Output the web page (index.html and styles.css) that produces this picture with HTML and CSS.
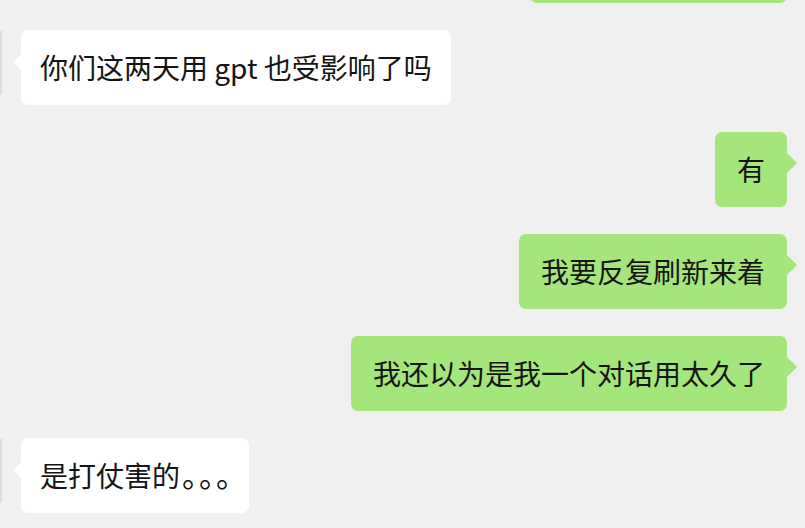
FILE: index.html
```html
<!DOCTYPE html>
<html lang="zh-CN">
<head>
	<meta charset="UTF-8">
	<title>聊天记录</title>
	<link rel="stylesheet" href="styles.css">
</head>
<body>
	<div class="chat">
		<div class="row mine">
			<div class="bubble cut"></div>
		</div>
		<div class="row other">
			<div class="avatar"></div>
			<div class="bubble">你们这两天用 gpt 也受影响了吗</div>
		</div>
		<div class="row mine">
			<div class="bubble">有</div>
		</div>
		<div class="row mine">
			<div class="bubble">我要反复刷新来着</div>
		</div>
		<div class="row mine">
			<div class="bubble">我还以为是我一个对话用太久了</div>
		</div>
		<div class="row other">
			<div class="avatar"></div>
			<div class="bubble">是打仗害的<span class="dots">。。。</span></div>
		</div>
	</div>
</body>
</html>
```

FILE: styles.css
```css
html, body {
	margin: 0;
	padding: 0;
	background: #f0f0f0;
	overflow: hidden;
}
body {
	width: 805px;
	height: 528px;
	font-family: "Noto Sans CJK SC", "Noto Sans", sans-serif;
}
.chat {
	display: flex;
	flex-direction: column;
	gap: 27px;
	margin-top: -72px;
}
.row {
	display: flex;
	align-items: flex-start;
}
.row.mine {
	justify-content: flex-end;
	padding-right: 18px;
}
.avatar {
	width: 3px;
	height: 64px;
	margin-top: 1px;
	margin-right: 18px;
	background: linear-gradient(to right, #d2d4d8, #e6e7e9 70%, #eeeeee);
}
.bubble {
	position: relative;
	font-size: 28px;
	line-height: 37px;
	padding: 19px;
	border-radius: 7px;
	color: #151515;
	white-space: nowrap;
}
.mine .bubble {
	background: #a4e57c;
	padding-left: 22px;
	padding-right: 22px;
}
.mine .bubble.cut {
	width: 213px;
	height: 37px;
}
.other .bubble {
	background: #ffffff;
}
.bubble::after {
	content: "";
	position: absolute;
	top: 21px;
	width: 0;
	height: 0;
	border-top: 10px solid transparent;
	border-bottom: 10px solid transparent;
}
.mine .bubble::after {
	right: -10px;
	border-left: 10px solid #a4e57c;
}
.other .bubble::after {
	left: -7px;
	border-top-width: 8px;
	border-bottom-width: 8px;
	top: 24px;
	border-right: 7px solid #ffffff;
}
.dots {
	font-size: 31px;
	line-height: 28px;
	text-spacing-trim: space-all;
	letter-spacing: -14px;
	margin-left: 2px;
	margin-right: -3px;
}
```
